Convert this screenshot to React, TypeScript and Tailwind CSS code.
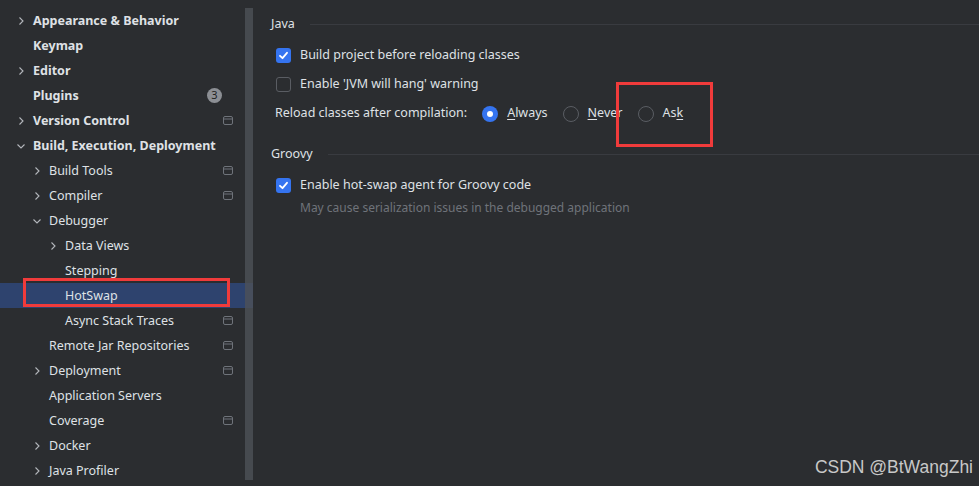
import React from "react";

type Item = {
  label: string;
  level: number;
  chevron?: "right" | "down";
  bold?: boolean;
  icon?: boolean;
  badge?: string;
  selected?: boolean;
};

const items: Item[] = [
  { label: "Appearance & Behavior", level: 0, chevron: "right", bold: true },
  { label: "Keymap", level: 0, bold: true },
  { label: "Editor", level: 0, chevron: "right", bold: true },
  { label: "Plugins", level: 0, bold: true, badge: "3" },
  { label: "Version Control", level: 0, chevron: "right", bold: true, icon: true },
  { label: "Build, Execution, Deployment", level: 0, chevron: "down", bold: true },
  { label: "Build Tools", level: 1, chevron: "right", icon: true },
  { label: "Compiler", level: 1, chevron: "right", icon: true },
  { label: "Debugger", level: 1, chevron: "down" },
  { label: "Data Views", level: 2, chevron: "right" },
  { label: "Stepping", level: 2 },
  { label: "HotSwap", level: 2, selected: true },
  { label: "Async Stack Traces", level: 2, icon: true },
  { label: "Remote Jar Repositories", level: 1, icon: true },
  { label: "Deployment", level: 1, chevron: "right", icon: true },
  { label: "Application Servers", level: 1 },
  { label: "Coverage", level: 1, icon: true },
  { label: "Docker", level: 1, chevron: "right" },
  { label: "Java Profiler", level: 1, chevron: "right" },
];

const Chevron = ({ dir }: { dir: "right" | "down" }) => (
  <svg width="10" height="10" viewBox="0 0 10 10" className="shrink-0">
    {dir === "right" ? (
      <path d="M3.5 1.5 L7 5 L3.5 8.5" fill="none" stroke="#b4b7bc" strokeWidth="1.1" />
    ) : (
      <path d="M1.5 3.5 L5 7 L8.5 3.5" fill="none" stroke="#b4b7bc" strokeWidth="1.1" />
    )}
  </svg>
);

const WinIcon = () => (
  <svg width="10" height="9" viewBox="0 0 10 9">
    <rect x="0.5" y="0.5" width="9" height="8" rx="1.5" fill="none" stroke="#6f737a" strokeWidth="1" />
    <line x1="0.5" y1="3" x2="9.5" y2="3" stroke="#6f737a" strokeWidth="1" />
  </svg>
);

const Checkbox = ({ checked }: { checked: boolean }) =>
  checked ? (
    <div className="w-[15px] h-[15px] rounded-[3px] bg-[#3574f0] flex items-center justify-center shrink-0">
      <svg width="11" height="11" viewBox="0 0 11 11">
        <path d="M2 5.8 L4.5 8.2 L9 2.8" fill="none" stroke="#ffffff" strokeWidth="1.8" strokeLinecap="round" strokeLinejoin="round" />
      </svg>
    </div>
  ) : (
    <div className="w-[15px] h-[15px] rounded-[3px] border border-[#5a5d63] shrink-0" />
  );

const Radio = ({ checked }: { checked: boolean }) =>
  checked ? (
    <div className="w-[16px] h-[16px] rounded-full bg-[#3574f0] flex items-center justify-center shrink-0">
      <div className="w-[6px] h-[6px] rounded-full bg-white" />
    </div>
  ) : (
    <div className="w-[16px] h-[16px] rounded-full border border-[#5a5d63] shrink-0" />
  );

export default function App() {
  return (
    <div
      className="w-[979px] h-[486px] bg-[#2b2d30] text-[#dfe1e5] text-[12.5px] flex overflow-hidden relative"
      style={{ fontFamily: "'Noto Sans', 'Open Sans', sans-serif" }}
    >
      {/* Sidebar */}
      <div className="w-[258px] shrink-0 relative pt-[8px]">
        {items.map((it) => (
          <div
            key={it.label}
            className={`relative h-[25px] flex items-center pr-[20px] w-[253px] ${it.selected ? "bg-[#2e436e]" : ""}`}
          >
            <div style={{ width: 17 + it.level * 16 }} className="shrink-0" />
            <div className="w-[16px] shrink-0 flex items-center -ml-[1px]">
              {it.chevron && <Chevron dir={it.chevron} />}
            </div>
            <span className={`leading-none whitespace-nowrap ml-[1px] translate-y-[1px] ${it.bold ? "font-bold" : ""}`}>{it.label}</span>
            <div className="flex-1" />
            {it.badge && (
              <div className="w-[15px] h-[15px] rounded-full bg-[#8c8f94] text-[#1e1f22] text-[11px] flex items-center justify-center mr-[11px]">
                {it.badge}
              </div>
            )}
            {it.icon && <WinIcon />}
            {it.selected && (
              <div className="absolute left-[23px] top-[-5px] w-[207px] h-[29px] border-[3px] border-[#f03b3b]" />
            )}
          </div>
        ))}
        {/* scrollbar */}
        <div className="absolute left-[245px] top-[8px] w-[8px] h-[472px] bg-[#4e5157] opacity-80" />
      </div>

      {/* Content */}
      <div className="flex-1 pl-[13px] pr-0 pt-[15px] relative">
        <div className="flex items-center h-[18px]">
          <span>Java</span>
          <div className="flex-1 h-px bg-[#393b40] ml-[15px]" />
        </div>
        <div className="pl-[5px]">
          <div className="flex items-center h-[29px] mt-[8px]">
            <Checkbox checked />
            <span className="ml-[9px]">Build project before reloading classes</span>
          </div>
          <div className="flex items-center h-[29px]">
            <Checkbox checked={false} />
            <span className="ml-[9px]">Enable 'JVM will hang' warning</span>
          </div>
          <div className="flex items-center h-[29px] -ml-[1px]">
            <span>Reload classes after compilation:</span>
            <div className="ml-[15px] flex items-center">
              <Radio checked />
              <span className="ml-[9px]">
                <span className="underline underline-offset-2">A</span>lways
              </span>
            </div>
            <div className="ml-[15px] flex items-center">
              <Radio checked={false} />
              <span className="ml-[9px]">
                <span className="underline underline-offset-2">N</span>ever
              </span>
            </div>
            <div className="ml-[16px] flex items-center">
              <Radio checked={false} />
              <span className="ml-[8px]">
                As<span className="underline underline-offset-2">k</span>
              </span>
            </div>
          </div>
        </div>
        <div className="flex items-center h-[18px] mt-[17px]">
          <span>Groovy</span>
          <div className="flex-1 h-px bg-[#393b40] ml-[15px]" />
        </div>
        <div className="pl-[5px]">
          <div className="flex items-center h-[29px] mt-[8px]">
            <Checkbox checked />
            <span className="ml-[9px]">Enable hot-swap agent for Groovy code</span>
          </div>
          <div className="pl-[24px] text-[12px] text-[#6f737a] leading-none mt-[2px]">
            May cause serialization issues in the debugged application
          </div>
        </div>
        {/* red box */}
        <div className="absolute left-[358px] top-[82px] w-[97px] h-[65px] border-[3px] border-[#f03b3b]" />
      </div>

      {/* watermark */}
      <div
        className="absolute right-[6px] bottom-[10px] text-[17.5px] text-[#c8c8c8] leading-none"
        style={{ fontFamily: "'Liberation Sans', Arial, sans-serif" }}
      >
        CSDN @BtWangZhi
      </div>
    </div>
  );
}
